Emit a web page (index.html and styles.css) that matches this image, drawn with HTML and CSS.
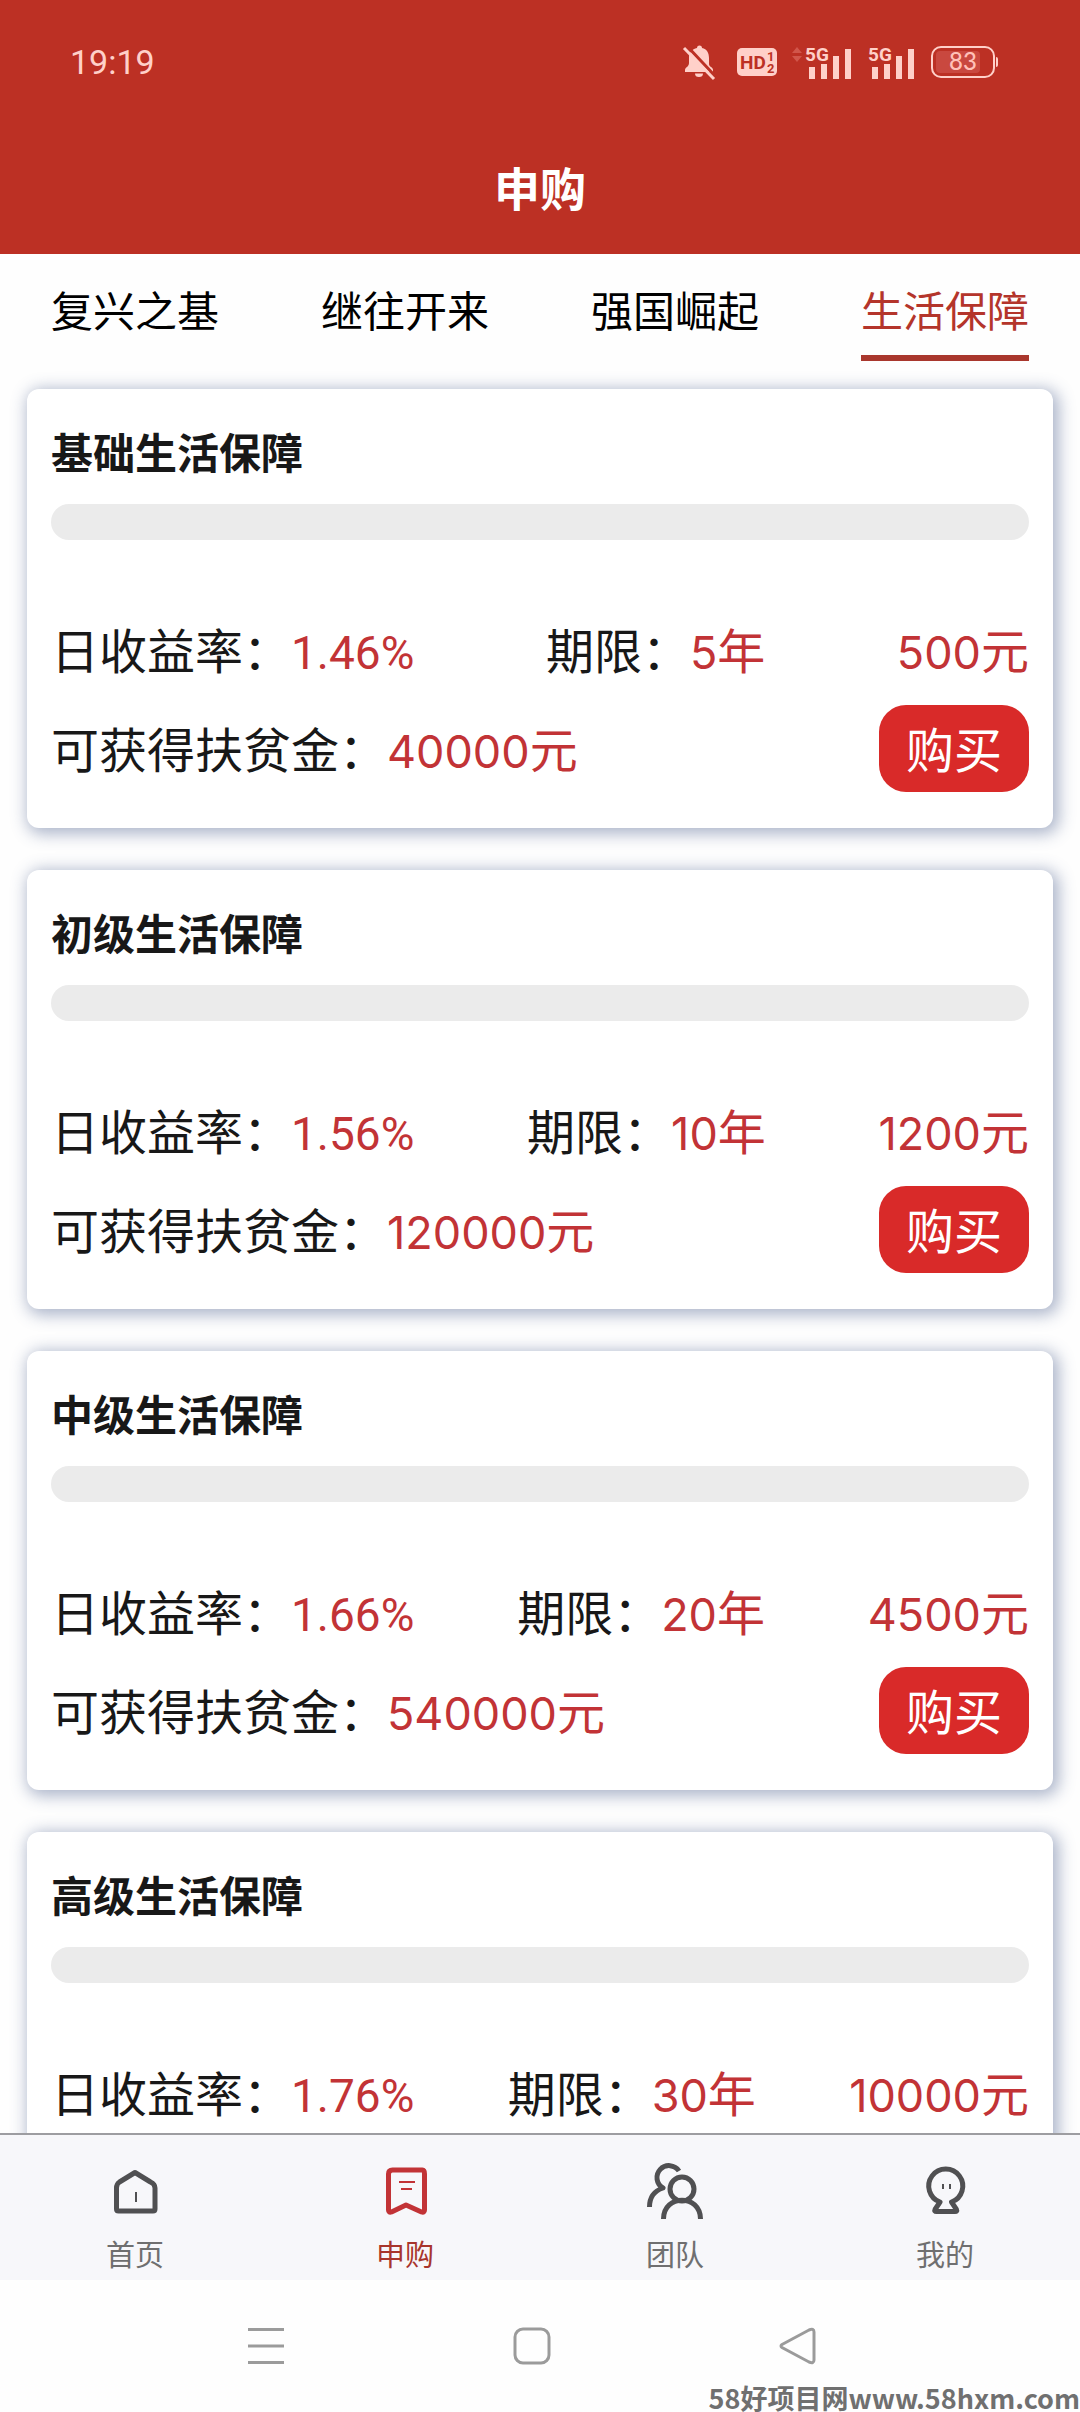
FILE: index.html
```html
<!DOCTYPE html>
<html lang="zh-CN">
<head>
<meta charset="utf-8">
<meta name="viewport" content="width=device-width">
<title>申购</title>
<link rel="stylesheet" href="styles.css">
</head>
<body>
<header class="header">
  <div class="status">
    <time class="clock">19:19</time>
    <div class="status-icons">
      <svg class="bell" width="32" height="36" viewBox="0 0 32 36" aria-hidden="true">
        <path class="fill" d="M14 4a2.500 2.500 0 0 1 5 0C24 5 26 9 26 14v6c0 3 4 3 4 6v2H2v-2c0-3 4-3 4-7v-6c0-4 3-8 8-9zM12 29.500h8a4 3.500 0 0 1-8 0z"/>
        <path class="cut" d="M3 1l30 32"/>
        <path class="slash" d="M1 4l30 31"/>
      </svg>
      <svg class="hd" width="40" height="28" viewBox="0 0 40 28" aria-hidden="true">
        <rect class="fill" width="40" height="28" rx="5"/>
        <text class="hd-text" x="3" y="21">HD</text>
        <text class="hd-small" x="30" y="13">1</text>
        <text class="hd-small" x="30" y="25">2</text>
      </svg>
      <svg class="signal-a" width="62" height="36" viewBox="0 0 62 36" aria-hidden="true">
        <path class="faint" d="M1 9l5-6 5 6zM1 12l5 6 5-6z"/>
        <text class="net" x="14" y="17">5G</text>
        <path class="fill" d="M18 23h6v12h-6zM30 20h6v15h-6zM42 12h6v23h-6zM54 5h6v30h-6z"/>
      </svg>
      <svg class="signal-b" width="48" height="36" viewBox="0 0 48 36" aria-hidden="true">
        <text class="net" x="0" y="17">5G</text>
        <path class="fill" d="M4 23h6v12H4zM16 20h6v15h-6zM28 12h6v23h-6zM40 5h6v30h-6z"/>
      </svg>
      <svg class="battery" width="68" height="32" viewBox="0 0 68 32" aria-hidden="true">
        <rect class="level" x="5" y="5" width="44" height="22" rx="4"/>
        <rect class="case" x="1" y="1" width="62" height="30" rx="9"/>
        <path class="fill" d="M65 11q2 0 2 2v6q0 2-2 2z"/>
        <text class="percent" x="32" y="24" text-anchor="middle">83</text>
      </svg>
    </div>
  </div>
  <h1 class="title">申购</h1>
</header>

<nav class="tabs">
  <a class="tab" href="#">复兴之基</a>
  <a class="tab" href="#">继往开来</a>
  <a class="tab" href="#">强国崛起</a>
  <a class="tab active" href="#" aria-current="page">生活保障</a>
</nav>

<main class="list">
  <article class="card">
    <h2 class="name">基础生活保障</h2>
    <div class="bar"></div>
    <div class="row facts">
      <span>日收益率：<b class="value rate">1.46%</b></span>
      <span>期限：<b class="value"><i class="num">5</i>年</b></span>
      <b class="value"><i class="num">500</i>元</b>
    </div>
    <div class="row">
      <span>可获得扶贫金：<b class="value"><i class="num">40000</i>元</b></span>
      <button class="buy" type="button">购买</button>
    </div>
  </article>
  <article class="card">
    <h2 class="name">初级生活保障</h2>
    <div class="bar"></div>
    <div class="row facts">
      <span>日收益率：<b class="value rate">1.56%</b></span>
      <span>期限：<b class="value"><i class="num">10</i>年</b></span>
      <b class="value"><i class="num">1200</i>元</b>
    </div>
    <div class="row">
      <span>可获得扶贫金：<b class="value"><i class="num">120000</i>元</b></span>
      <button class="buy" type="button">购买</button>
    </div>
  </article>
  <article class="card">
    <h2 class="name">中级生活保障</h2>
    <div class="bar"></div>
    <div class="row facts">
      <span>日收益率：<b class="value rate">1.66%</b></span>
      <span>期限：<b class="value"><i class="num">20</i>年</b></span>
      <b class="value"><i class="num">4500</i>元</b>
    </div>
    <div class="row">
      <span>可获得扶贫金：<b class="value"><i class="num">540000</i>元</b></span>
      <button class="buy" type="button">购买</button>
    </div>
  </article>
  <article class="card">
    <h2 class="name">高级生活保障</h2>
    <div class="bar"></div>
    <div class="row facts">
      <span>日收益率：<b class="value rate">1.76%</b></span>
      <span>期限：<b class="value"><i class="num">30</i>年</b></span>
      <b class="value"><i class="num">10000</i>元</b>
    </div>
  </article>
</main>

<nav class="tabbar">
  <a class="item" href="#">
    <svg class="icon" width="60" height="60" viewBox="0 0 60 60" aria-hidden="true">
      <path d="M11.500 48V27q0-4 3-6L30 11.500 45.500 21q4.500 2 4.500 6v21q0 2-2 2H13.500q-2 0-2-2z"/>
      <path class="thin" d="M31 31v10"/>
    </svg>
    <span>首页</span>
  </a>
  <a class="item current" href="#" aria-current="page">
    <svg class="icon" width="60" height="60" viewBox="0 0 60 60" aria-hidden="true">
      <path d="M13.500 49V13q0-4 4-4h30q2 0 2 4v36q0 3-3 2L31 44 16.500 51q-3 1-3-2z"/>
      <path class="thin" d="M24 21h16M26 28h11"/>
    </svg>
    <span>申购</span>
  </a>
  <a class="item" href="#">
    <svg class="icon" width="60" height="60" viewBox="0 0 60 60" aria-hidden="true">
      <path d="M34 10A12 12 0 1 0 18 27C9 30 4.500 36 4.500 46"/>
      <circle cx="37" cy="28" r="12"/>
      <path d="M18.500 58C18.500 33 55.500 33 55.500 58"/>
    </svg>
    <span>团队</span>
  </a>
  <a class="item" href="#">
    <svg class="icon" width="60" height="60" viewBox="0 0 60 60" aria-hidden="true">
      <path d="M25 41A17 17 0 1 1 36.500 41L41.500 48.500q1 2-1.500 2H21.500q-2.500 0-1.500-2z"/>
      <path class="thin" d="M28 23v5M35 23v5"/>
    </svg>
    <span>我的</span>
  </a>
</nav>

<footer class="system">
  <button class="key" type="button" aria-label="菜单">
    <svg width="40" height="40" viewBox="0 0 40 40"><path d="M2 3.500h36M2 20h36M2 36.500h36"/></svg>
  </button>
  <button class="key" type="button" aria-label="主屏幕">
    <svg width="40" height="40" viewBox="0 0 40 40"><rect x="3" y="3" width="34" height="34" rx="8"/></svg>
  </button>
  <button class="key" type="button" aria-label="返回">
    <svg width="40" height="40" viewBox="0 0 40 40"><path d="M4 18.500 31 4q5-2 5 2v28q0 4-5 2L4 21.500q-2-1.500 0-3z"/></svg>
  </button>
  <span class="site">58好项目网www.58hxm.com</span>
</footer>
</body>
</html>
```
FILE: styles.css
```css
* {
  box-sizing: border-box;
}

body {
  display: flex;
  flex-direction: column;
  height: 100vh;
  margin: 0;
  background: #fefefe;
  color: #181818;
  font-family: "Noto Sans CJK SC", sans-serif;
}

a {
  color: inherit;
  text-decoration: none;
}

svg {
  overflow: visible;
}

.header {
  flex: none;
  background: #bc3024;
  color: #fff;
}

.status {
  display: flex;
  justify-content: space-between;
  align-items: center;
  height: 124px;
  padding: 0 81px 0 70px;
  color: #ffd0c9;
}

.clock {
  font: 400 34px/48px Roboto, sans-serif;
}

.status-icons {
  display: flex;
  align-items: center;
}

.hd {
  margin-left: 22px;
}

.signal-a {
  margin-left: 14px;
}

.signal-b,
.battery {
  margin-left: 15px;
}

.fill {
  fill: #ffd0c9;
}

.faint {
  fill: #d1564b;
}

.cut {
  stroke: #bc3024;
  stroke-width: 3;
}

.slash {
  stroke: #ffd0c9;
  stroke-width: 3;
}

.hd-text {
  fill: #bc3024;
  font: 700 19px Roboto, sans-serif;
}

.hd-small {
  fill: #bc3024;
  font: 700 13px Roboto, sans-serif;
}

.net {
  fill: #ffd0c9;
  font: 700 19px Roboto, sans-serif;
}

.level {
  fill: #c9483f;
}

.case {
  fill: none;
  stroke: #ffd0c9;
  stroke-width: 2;
}

.percent {
  fill: #ffc0b8;
  font: 500 24px Lato, sans-serif;
}

.title {
  margin: 0;
  padding-bottom: 6px;
  font-size: 46px;
  font-weight: 700;
  line-height: 124px;
  text-align: center;
}

.tabs {
  display: flex;
  flex: none;
  justify-content: space-between;
  padding: 0 51px;
  color: #000;
  font-size: 42px;
}

.tab {
  padding: 23px 0 15px;
  border-bottom: 6px solid transparent;
  line-height: 63px;
}

.tab.active {
  border-color: #a9372d;
  color: #b4352b;
}

.list {
  display: flex;
  flex: 1;
  flex-direction: column;
  gap: 42px;
  min-height: 0;
  padding: 28px 27px;
  overflow-y: auto;
  scrollbar-width: none;
}

.card {
  flex: none;
  padding: 31px 24px 36px;
  border-radius: 12px;
  background: #fff;
  box-shadow: 3px 3px 16px 3px rgba(60, 80, 130, 0.42);
}

.name {
  margin: 0 0 22px;
  font-size: 42px;
  font-weight: 700;
  line-height: 62px;
}

.bar {
  height: 36px;
  border-radius: 18px;
  background: #ebebeb;
}

.row {
  display: flex;
  justify-content: space-between;
  align-items: flex-start;
  font-size: 48px;
  line-height: 84px;
}

.facts {
  padding: 66px 0 15px;
}

.value {
  color: #c23336;
  font-weight: 400;
}

.rate {
  font-family: Roboto, sans-serif;
  font-size: 46px;
  line-height: 1;
}

.num {
  font-family: Inter, sans-serif;
  font-size: 45px;
  font-style: normal;
  line-height: 1;
}

.buy {
  height: 87px;
  padding: 0 27px 3px;
  border: 0;
  border-radius: 27px;
  background: #d92a29;
  color: #fff;
  font: 400 48px/84px "Noto Sans CJK SC", sans-serif;
}

.tabbar {
  display: grid;
  flex: none;
  grid-template-columns: repeat(4, 1fr);
  height: 147px;
  border-top: 2px solid #9d9da1;
  background: #f7f7fa;
  color: #6f6f70;
}

.item {
  display: flex;
  flex-direction: column;
  gap: 10px;
  align-items: center;
  padding-top: 26px;
  font-size: 29px;
  line-height: 44px;
}

.item.current {
  color: #a8352c;
}

.icon {
  fill: none;
  stroke: #505052;
  stroke-linejoin: round;
  stroke-width: 5;
}

.current .icon {
  stroke: #c23336;
}

.icon .thin {
  stroke-width: 2;
}

.system {
  display: flex;
  position: relative;
  flex: none;
  gap: 226px;
  justify-content: center;
  height: 132px;
  padding: 46px 16px 0 0;
}

.key {
  height: 40px;
  padding: 0;
  border: 0;
  background: none;
}

.key svg {
  display: block;
  fill: none;
  stroke: #9b9b9b;
  stroke-width: 3;
}

.site {
  position: absolute;
  right: 0;
  bottom: 0;
  color: #707070;
  font-size: 27px;
  font-weight: 700;
  line-height: 28px;
}
```
